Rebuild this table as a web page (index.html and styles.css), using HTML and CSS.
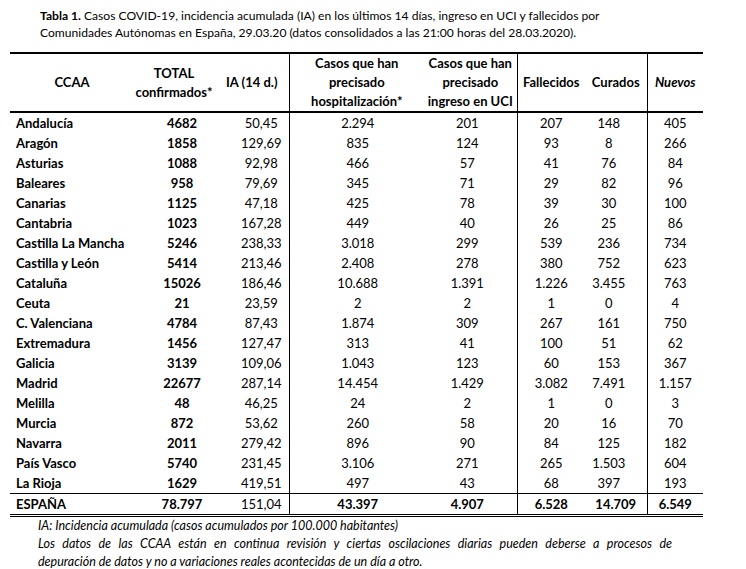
FILE: index.html
```html
<!DOCTYPE html>
<html lang="es">
<head>
<meta charset="utf-8">
<title>Tabla 1</title>
<link rel="stylesheet" href="styles.css">
</head>
<body>
<div class="page">
  <p class="title"><b>Tabla 1.</b> Casos COVID-19, incidencia acumulada (IA) en los últimos 14 días, ingreso en UCI y fallecidos por<br>Comunidades Autónomas en España, 29.03.20 (datos consolidados a las 21:00 horas del 28.03.2020).</p>
  <table class="data">
    <colgroup>
      <col class="c1"><col class="c2"><col class="c3"><col class="c4"><col class="c5"><col class="c6"><col class="c7"><col class="c8">
    </colgroup>
    <thead>
      <tr>
        <th>CCAA</th>
        <th class="h2">TOTAL<br>confirmados*</th>
        <th class="h3">IA (14 d.)</th>
        <th class="vl h4">Casos que han<br>precisado<br>hospitalización*</th>
        <th class="h5">Casos que han<br>precisado<br>ingreso en UCI</th>
        <th class="vl h6">Fallecidos</th>
        <th class="h7">Curados</th>
        <th class="vl"><i>Nuevos</i></th>
      </tr>
    </thead>
    <tbody>
      <tr><td class="name">Andalucía</td><td class="tot">4682</td><td class="ia">50,45</td><td class="vl hos">2.294</td><td class="uci">201</td><td class="vl fal">207</td><td class="cur">148</td><td class="vl nue">405</td></tr>
      <tr><td class="name">Aragón</td><td class="tot">1858</td><td class="ia">129,69</td><td class="vl hos">835</td><td class="uci">124</td><td class="vl fal">93</td><td class="cur">8</td><td class="vl nue">266</td></tr>
      <tr><td class="name">Asturias</td><td class="tot">1088</td><td class="ia">92,98</td><td class="vl hos">466</td><td class="uci">57</td><td class="vl fal">41</td><td class="cur">76</td><td class="vl nue">84</td></tr>
      <tr><td class="name">Baleares</td><td class="tot">958</td><td class="ia">79,69</td><td class="vl hos">345</td><td class="uci">71</td><td class="vl fal">29</td><td class="cur">82</td><td class="vl nue">96</td></tr>
      <tr><td class="name">Canarias</td><td class="tot">1125</td><td class="ia">47,18</td><td class="vl hos">425</td><td class="uci">78</td><td class="vl fal">39</td><td class="cur">30</td><td class="vl nue">100</td></tr>
      <tr><td class="name">Cantabria</td><td class="tot">1023</td><td class="ia">167,28</td><td class="vl hos">449</td><td class="uci">40</td><td class="vl fal">26</td><td class="cur">25</td><td class="vl nue">86</td></tr>
      <tr><td class="name">Castilla La Mancha</td><td class="tot">5246</td><td class="ia">238,33</td><td class="vl hos">3.018</td><td class="uci">299</td><td class="vl fal">539</td><td class="cur">236</td><td class="vl nue">734</td></tr>
      <tr><td class="name">Castilla y León</td><td class="tot">5414</td><td class="ia">213,46</td><td class="vl hos">2.408</td><td class="uci">278</td><td class="vl fal">380</td><td class="cur">752</td><td class="vl nue">623</td></tr>
      <tr><td class="name">Cataluña</td><td class="tot">15026</td><td class="ia">186,46</td><td class="vl hos">10.688</td><td class="uci">1.391</td><td class="vl fal">1.226</td><td class="cur">3.455</td><td class="vl nue">763</td></tr>
      <tr><td class="name">Ceuta</td><td class="tot">21</td><td class="ia">23,59</td><td class="vl hos">2</td><td class="uci">2</td><td class="vl fal">1</td><td class="cur">0</td><td class="vl nue">4</td></tr>
      <tr><td class="name">C. Valenciana</td><td class="tot">4784</td><td class="ia">87,43</td><td class="vl hos">1.874</td><td class="uci">309</td><td class="vl fal">267</td><td class="cur">161</td><td class="vl nue">750</td></tr>
      <tr><td class="name">Extremadura</td><td class="tot">1456</td><td class="ia">127,47</td><td class="vl hos">313</td><td class="uci">41</td><td class="vl fal">100</td><td class="cur">51</td><td class="vl nue">62</td></tr>
      <tr><td class="name">Galicia</td><td class="tot">3139</td><td class="ia">109,06</td><td class="vl hos">1.043</td><td class="uci">123</td><td class="vl fal">60</td><td class="cur">153</td><td class="vl nue">367</td></tr>
      <tr><td class="name">Madrid</td><td class="tot">22677</td><td class="ia">287,14</td><td class="vl hos">14.454</td><td class="uci">1.429</td><td class="vl fal">3.082</td><td class="cur">7.491</td><td class="vl nue">1.157</td></tr>
      <tr><td class="name">Melilla</td><td class="tot">48</td><td class="ia">46,25</td><td class="vl hos">24</td><td class="uci">2</td><td class="vl fal">1</td><td class="cur">0</td><td class="vl nue">3</td></tr>
      <tr><td class="name">Murcia</td><td class="tot">872</td><td class="ia">53,62</td><td class="vl hos">260</td><td class="uci">58</td><td class="vl fal">20</td><td class="cur">16</td><td class="vl nue">70</td></tr>
      <tr><td class="name">Navarra</td><td class="tot">2011</td><td class="ia">279,42</td><td class="vl hos">896</td><td class="uci">90</td><td class="vl fal">84</td><td class="cur">125</td><td class="vl nue">182</td></tr>
      <tr><td class="name">País Vasco</td><td class="tot">5740</td><td class="ia">231,45</td><td class="vl hos">3.106</td><td class="uci">271</td><td class="vl fal">265</td><td class="cur">1.503</td><td class="vl nue">604</td></tr>
      <tr><td class="name">La Rioja</td><td class="tot">1629</td><td class="ia">419,51</td><td class="vl hos">497</td><td class="uci">43</td><td class="vl fal">68</td><td class="cur">397</td><td class="vl nue">193</td></tr>
    </tbody>
    <tfoot>
      <tr><td class="name">ESPAÑA</td><td class="tot">78.797</td><td class="ia">151,04</td><td class="vl hos b">43.397</td><td class="uci b">4.907</td><td class="vl fal b">6.528</td><td class="cur b">14.709</td><td class="vl nue b">6.549</td></tr>
    </tfoot>
  </table>
  <div class="notes">
    <p class="note">IA: Incidencia acumulada (casos acumulados por 100.000 habitantes)</p>
    <p class="note"><span class="line-just">Los datos de las CCAA están en continua revisión y ciertas oscilaciones diarias pueden deberse a procesos de</span><span class="line">depuración de datos y no a variaciones reales acontecidas de un día a otro.</span></p>
  </div>
</div>
</body>
</html>
```
FILE: styles.css
```css
html, body {
  margin: 0;
  padding: 0;
  background: #fff;
}
body {
  font-family: Lato, "Open Sans", sans-serif;
  color: #000;
  font-size: 13px;
}
.page {
  padding: 7px 0 0 10px;
}
.title {
  margin: 0 0 11px 30px;
  font-size: 12.1px;
  line-height: 17px;
}
.data {
  border-collapse: collapse;
  table-layout: fixed;
  width: 693px;
}
.c1 { width: 124px; }
.c2 { width: 88px; }
.c3 { width: 67px; }
.c4 { width: 135px; }
.c5 { width: 93px; }
.c6 { width: 68px; }
.c7 { width: 62px; }
.c8 { width: 56px; }

.data th {
  font-weight: bold;
  line-height: 19px;
  height: 54px;
  padding: 0;
  text-align: center;
  vertical-align: middle;
  border-top: 2px solid #000;
  border-bottom: 2px solid #000;
  white-space: nowrap;
}
.data .h2 { padding-right: 8px; }
.data .h3 { padding-right: 7px; }

.data td {
  padding: 0;
  height: 20px;
  line-height: 20px;
  text-align: center;
  white-space: nowrap;
}
.data .vl { border-left: 1px solid #000; }
.data td.name {
  text-align: left;
  padding-left: 6px;
  font-weight: bold;
}
.data td.tot { font-weight: bold; padding-left: 8px; }
.data td.ia { padding-left: 12px; }
.data td.hos { padding-left: 2px; }
.data td.uci { padding-right: 6px; }
.data td.cur { padding-right: 14px; }
.data td.b { font-weight: bold; }
.data tfoot td.cur { padding-right: 0; }

.data tfoot td {
  border-top: 1px solid #000;
  border-bottom: 3px double #000;
}

.notes {
  margin-left: 28px;
  width: 634px;
}
.note {
  margin: 0;
  font-style: italic;
  font-size: 12.5px;
  line-height: 18px;
}
.line-just {
  display: block;
  text-align: justify;
  text-align-last: justify;
}
.line {
  display: block;
}
```
